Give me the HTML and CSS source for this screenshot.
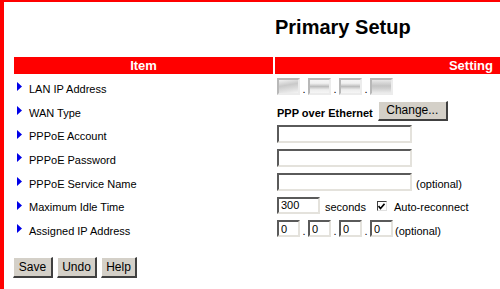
FILE: index.html
```html
<!DOCTYPE html>
<html>
<head>
<meta charset="utf-8">
<title>Primary Setup</title>
<link rel="stylesheet" href="styles.css">
</head>
<body>
<div class="frame">
  <div class="title-row">
    <div></div>
    <h1 class="title">Primary Setup</h1>
  </div>
  <div class="grid">
    <div class="th th-item">Item</div>
    <div class="th th-setting">Setting</div>

    <div class="label"><svg class="arrow" width="5" height="9" viewBox="0 0 5 9"><polygon points="0,0 5,4.5 0,9" fill="#0000e8"/></svg>LAN IP Address</div>
    <div class="value">
      <span class="box ip blur"></span><span class="dot">.</span><span class="box ip blur b2"></span><span class="dot">.</span><span class="box ip blur b2"></span><span class="dot">.</span><span class="box ip blur b4"></span>
    </div>

    <div class="label"><svg class="arrow" width="5" height="9" viewBox="0 0 5 9"><polygon points="0,0 5,4.5 0,9" fill="#0000e8"/></svg>WAN Type</div>
    <div class="value">
      <span class="txt bold">PPP over Ethernet</span><button class="btn change">Change...</button>
    </div>

    <div class="label"><svg class="arrow" width="5" height="9" viewBox="0 0 5 9"><polygon points="0,0 5,4.5 0,9" fill="#0000e8"/></svg>PPPoE Account</div>
    <div class="value"><input class="box wide" type="text" value=""></div>

    <div class="label"><svg class="arrow" width="5" height="9" viewBox="0 0 5 9"><polygon points="0,0 5,4.5 0,9" fill="#0000e8"/></svg>PPPoE Password</div>
    <div class="value"><input class="box wide" type="password" value=""></div>

    <div class="label"><svg class="arrow" width="5" height="9" viewBox="0 0 5 9"><polygon points="0,0 5,4.5 0,9" fill="#0000e8"/></svg>PPPoE Service Name</div>
    <div class="value"><input class="box wide" type="text" value=""><span class="txt opt">(optional)</span></div>

    <div class="label"><svg class="arrow" width="5" height="9" viewBox="0 0 5 9"><polygon points="0,0 5,4.5 0,9" fill="#0000e8"/></svg>Maximum Idle Time</div>
    <div class="value">
      <input class="box idle" type="text" value="300"><span class="txt sec">seconds</span><span class="check"><svg width="7" height="7" viewBox="0 0 7 7"><polyline points="0.5,3 2.5,5.5 6.5,0.8" fill="none" stroke="#000" stroke-width="1.6"/></svg></span><span class="txt">Auto-reconnect</span>
    </div>

    <div class="label"><svg class="arrow" width="5" height="9" viewBox="0 0 5 9"><polygon points="0,0 5,4.5 0,9" fill="#0000e8"/></svg>Assigned IP Address</div>
    <div class="value">
      <input class="box ip" type="text" value="0"><span class="dot">.</span><input class="box ip" type="text" value="0"><span class="dot">.</span><input class="box ip" type="text" value="0"><span class="dot">.</span><input class="box ip" type="text" value="0"><span class="txt opt2">(optional)</span>
    </div>
  </div>
  <div class="buttons">
    <button class="btn w40">Save</button>
    <button class="btn w40">Undo</button>
    <button class="btn w36">Help</button>
  </div>
</div>
</body>
</html>
```

FILE: styles.css
```css
html, body {
  margin: 0;
  padding: 0;
  background: #fff;
}

body {
  font-family: "Liberation Sans", Arial, sans-serif;
  font-size: 11px;
  color: #000;
}

.frame {
  height: 287px;
  border-top: 2px solid #ff0000;
  border-left: 4px solid #ff0000;
  padding: 14px 0 0 10px;
  box-sizing: content-box;
  overflow: hidden;
}

.title-row {
  display: grid;
  grid-template-columns: 259px 1fr;
  column-gap: 2px;
  height: 23px;
  margin-bottom: 18px;
}

.title {
  margin: 0;
  font-size: 20px;
  line-height: 23px;
  font-weight: bold;
  white-space: nowrap;
}

.grid {
  display: grid;
  grid-template-columns: 259px 1fr;
  grid-template-rows: 18px repeat(7, 23.7px);
  column-gap: 2px;
}

.th {
  height: 17px;
  background: #ff0000;
  color: #fff;
  font-weight: bold;
  font-size: 13px;
  line-height: 17px;
}

.th-item {
  text-align: center;
}

.th-setting {
  text-align: right;
  padding-right: 7px;
}

.label {
  display: flex;
  align-items: center;
  padding: 4px 0 0 3px;
  box-sizing: border-box;
  white-space: nowrap;
}

.arrow {
  display: block;
  margin: 0 7px 4px 0;
}

.value {
  display: flex;
  align-items: center;
  padding-left: 2px;
  white-space: nowrap;
}

.txt {
  margin-top: 4px;
}

.bold {
  font-weight: bold;
}

.dot {
  width: 8px;
  text-align: center;
  margin-top: 4px;
}

.box {
  box-sizing: border-box;
  height: 18px;
  border-style: solid;
  border-width: 2px;
  border-color: #5a5a5a #e4e2dc #e4e2dc #5a5a5a;
  background: #fff;
  padding: 0 2px;
  margin: 0;
  font-family: "Liberation Sans", Arial, sans-serif;
  font-size: 11px;
  color: #000;
  outline: none;
}

.box.ip {
  width: 23px;
  height: 17px;
  display: block;
}

.blur {
  border-color: #b8b8b8 #ececec #ececec #b8b8b8;
  background: linear-gradient(170deg, #f2f2f2 0%, #c9c9c9 40%, #dedede 70%, #f4f4f4 100%);
}

.blur.b2 {
  background: linear-gradient(180deg, #f6f6f6 0%, #f0f0f0 25%, #bdbdbd 50%, #eeeeee 75%, #f6f6f6 100%);
}

.blur.b4 {
  background: linear-gradient(180deg, #e8e8e8 0%, #c4c4c4 45%, #cfcfcf 65%, #ececec 100%);
}

.box.wide {
  width: 135px;
}

.box.idle {
  width: 43px;
  height: 17px;
}

.opt {
  margin-left: 4px;
}

.opt2 {
  margin-left: 2px;
}

.sec {
  margin-left: 5px;
  margin-right: 11px;
}

.check {
  box-sizing: border-box;
  width: 10px;
  height: 10px;
  border-style: solid;
  border-width: 1px;
  border-color: #404040 #e0e0e0 #e0e0e0 #404040;
  background: #fff;
  display: flex;
  align-items: center;
  justify-content: center;
  margin: 2px 7px 0 0;
}

.check svg {
  display: block;
}

.btn {
  box-sizing: border-box;
  height: 21px;
  padding: 0;
  margin: 0;
  background: #d4d0c8;
  border-style: solid;
  border-width: 1px 2px 2px 1px;
  border-color: #ffffff #404040 #404040 #ffffff;
  font-family: "Liberation Sans", Arial, sans-serif;
  font-size: 12px;
  color: #000;
  line-height: 16px;
  text-align: center;
}

.w40 {
  width: 40px;
}

.w36 {
  width: 36px;
}

.btn.change {
  height: 20px;
  width: 70px;
  margin-left: 5px;
}

.buttons {
  display: flex;
  gap: 4px;
  margin-top: 16px;
  margin-left: -1px;
}
```
